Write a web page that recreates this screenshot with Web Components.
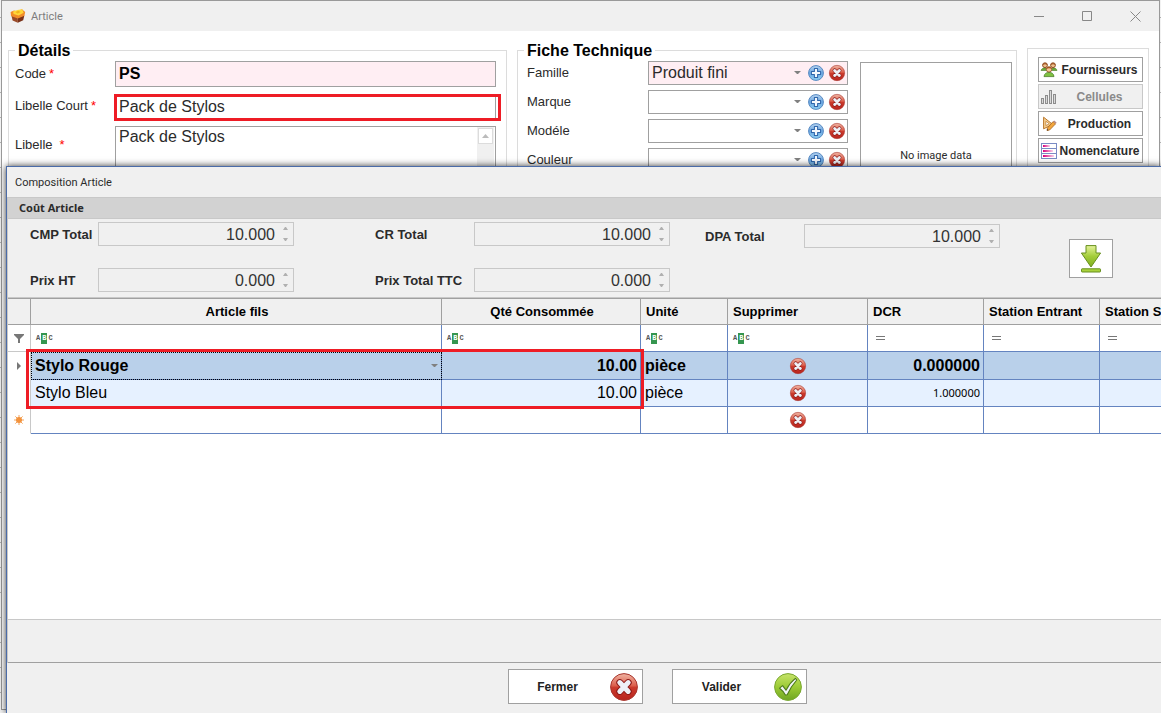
<!DOCTYPE html>
<html lang="fr">
<head>
<meta charset="utf-8">
<title>Article</title>
<style>
  html, body { margin: 0; height: 100%; }
  body {
    overflow: hidden;
    font-family: "Liberation Sans", Arial, sans-serif;
    font-size: 13px;
    color: #2b2b2b;
    --ui: Roboto, Tahoma, sans-serif;
    --ui-wide: "Noto Sans", Tahoma, sans-serif;
    --line: #a0a0a0;
    --soft: #c8c8c8;
    --face: #f0f0f0;
    --mark: #ee1c25;
    --blue: #6484c0;
  }
</style>
</head>
<body>
<app-desktop>
  <app-window caption="Article">
    <group-box caption="Détails">
      <text-field label="Code" value="PS" tone="key"></text-field>
      <text-field label="Libelle Court" value="Pack de Stylos" marked></text-field>
      <memo-field label="Libelle" value="Pack de Stylos"></memo-field>
    </group-box>
    <group-box caption="Fiche Technique">
      <sheet-layout>
        <combo-field label="Famille" value="Produit fini"></combo-field>
        <combo-field label="Marque"></combo-field>
        <combo-field label="Modéle"></combo-field>
        <combo-field label="Couleur"></combo-field>
        <image-box slot="image">No image data</image-box>
      </sheet-layout>
    </group-box>
    <tool-panel>
      <tool-button icon="people">Fournisseurs</tool-button>
      <tool-button icon="bars" disabled>Cellules</tool-button>
      <tool-button icon="draft">Production</tool-button>
      <tool-button icon="list">Nomenclature</tool-button>
    </tool-panel>
  </app-window>
  <composition-dialog slot="dialog" caption="Composition Article">
    <cost-panel slot="cost" caption="Coût Article">
      <number-field slot="a" label="CMP Total" value="10.000" narrow></number-field>
      <number-field slot="a" label="Prix HT" value="0.000" narrow></number-field>
      <number-field slot="b" label="CR Total" value="10.000"></number-field>
      <number-field slot="b" label="Prix Total TTC" value="0.000"></number-field>
      <number-field slot="c" label="DPA Total" value="10.000"></number-field>
    </cost-panel>
    <component-grid></component-grid>
    <dialog-button slot="actions" icon="cross">Fermer</dialog-button>
    <dialog-button slot="actions" icon="check">Valider</dialog-button>
  </composition-dialog>
</app-desktop>

<script>
const ICONS = {
  cross: `<svg viewBox="0 0 28 28"><defs><linearGradient id="g" x1="0" y1="0" x2="0" y2="1"><stop offset="0" stop-color="#f0b5a4"/><stop offset=".45" stop-color="#dc5f4c"/><stop offset=".52" stop-color="#cb3a2c"/><stop offset="1" stop-color="#b8241e"/></linearGradient></defs>
    <circle cx="14" cy="14" r="13.4" fill="url(#g)" stroke="#a8372f" stroke-width="1"/>
    <path d="M9.8 9.6 18.2 18.4M18.2 9.6 9.8 18.4" stroke="#8d1a18" stroke-width="7" stroke-linecap="round"/>
    <path d="M9.8 9.6 18.2 18.4M18.2 9.6 9.8 18.4" stroke="#eef0f6" stroke-width="5" stroke-linecap="round"/></svg>`,
  plus: `<svg viewBox="0 0 28 28"><defs><linearGradient id="g" x1="0" y1="0" x2="0" y2="1"><stop offset="0" stop-color="#b6d3f0"/><stop offset=".5" stop-color="#6ba6e0"/><stop offset="1" stop-color="#8fd0f3"/></linearGradient></defs>
    <circle cx="14" cy="14" r="13" fill="url(#g)" stroke="#4f82bd" stroke-width="1.6"/>
    <path d="M11.2 6h5.6v5.2H22v5.6h-5.2V22h-5.6v-5.2H6v-5.6h5.2z" fill="#f4f8fd" stroke="#2f66ab" stroke-width="1.8" stroke-linejoin="round"/></svg>`,
  check: `<svg viewBox="0 0 28 28"><defs><linearGradient id="g" x1="0" y1="0" x2="0" y2="1"><stop offset="0" stop-color="#c6e36a"/><stop offset=".5" stop-color="#9ccb35"/><stop offset="1" stop-color="#6fa524"/></linearGradient></defs>
    <circle cx="14" cy="14" r="13.4" fill="url(#g)" stroke="#7aa832" stroke-width="1"/>
    <path d="M5.6 15.2 8.6 12.6 12 17.2C14.4 12.4 17.6 8.4 21.4 5.4L22.8 7C18.8 11.4 15.8 16 13.2 21.8L11.4 22C9.8 19.2 7.8 16.8 5.6 15.2z" fill="#f2f5f8" stroke="#4d7a1c" stroke-width="1.1" stroke-linejoin="round"/></svg>`,
  down: `<svg viewBox="0 0 22 28"><defs><linearGradient id="g" x1="0" y1="0" x2="0" y2="1"><stop offset="0" stop-color="#e4f39a"/><stop offset=".5" stop-color="#a3cd3a"/><stop offset="1" stop-color="#7fae20"/></linearGradient></defs>
    <path d="M6 .6h10v7.4h4.6L11 22 1.4 8H6z" fill="url(#g)" stroke="#668f1e" stroke-width="1" stroke-linejoin="round"/>
    <rect x="1.5" y="23.8" width="19" height="3.2" rx=".6" fill="#a9d23c" stroke="#668f1e"/></svg>`,
  people: `<svg viewBox="0 0 16 16"><path d="M0 8.5C.6 6.6 2 6 3.6 6s2.8.6 3.2 2.5zM9.2 8.5C9.8 6.6 11.2 6 12.8 6s2.6.6 3.2 2.5z" fill="#6fa93c" stroke="#4c7f28" stroke-width=".6"/>
    <circle cx="4" cy="3.2" r="2.4" fill="#efc08e" stroke="#8e4f22"/><circle cx="12" cy="3.2" r="2.4" fill="#efc08e" stroke="#8e4f22"/>
    <path d="M1.6 3C1.6.6 6.4.6 6.4 3 5 1.8 3 1.9 1.6 3zM9.6 3c0-2.4 4.8-2.4 4.8 0-1.4-1.2-3.4-1.1-4.8 0z" fill="#9a4b1c"/>
    <path d="M3 14.6C3.4 11.4 5.4 10.4 8 10.4s4.6 1 5 4.2z" fill="#7fc241" stroke="#4c7f28" stroke-width=".8"/>
    <circle cx="8" cy="7.4" r="2.7" fill="#f3c998" stroke="#8e4f22" stroke-width=".8"/><path d="M5.2 7C5.2 4 10.8 4 10.8 7 9.2 5.9 6.8 5.9 5.2 7z" fill="#a7561f"/></svg>`,
  bars: `<svg viewBox="0 0 16 16" style="fill:#d9d9d9" stroke="#8d8d8d"><rect x=".5" y="9.5" width="2" height="5"/><rect x="4.5" y="6.5" width="2" height="8"/><rect x="8.5" y="1.5" width="2" height="13"/><rect x="12.5" y="5.5" width="2" height="9"/></svg>`,
  draft: `<svg viewBox="0 0 16 16"><path d="M2.6 1.2V12.8L11.6 8.4z" fill="#f7cf8f" stroke="#b9772c"/><path d="M4.8 5.2V9.6L8.2 7.8z" fill="#fff" stroke="#b9772c" stroke-width=".7"/>
    <path d="M6 14.6 6.4 12 12 5.6l2.6 2.2-6 6.2z" fill="#f2a63c" stroke="#a7641f" stroke-width=".8"/><path d="m12 5.6 1.2-1 2.4 2-1 1.2z" fill="#b98c86"/><path d="m6 14.6.3-1.6 1.2 1.1z" fill="#333"/></svg>`,
  list: `<svg viewBox="0 0 16 16"><defs><linearGradient id="g"><stop offset="0" stop-color="#d6007c"/><stop offset="1" stop-color="#f8d3ea"/></linearGradient></defs>
    <rect x=".5" y=".5" width="15" height="15" fill="#fff" stroke="#7a8bc4"/><path d="M.5 5.5h15M.5 10.5h15" stroke="#7a8bc4"/>
    <rect x="2" y="2" width="7" height="2" fill="url(#g)"/><rect x="2" y="7" width="10" height="2" fill="url(#g)"/><rect x="2" y="12" width="11" height="2" fill="url(#g)"/></svg>`,
  box: `<svg viewBox="0 0 16 16"><path d="M1.4 7.6 7.8 9.8v5L2.6 12.6z" fill="#9a4a28"/><path d="m7.8 9.8 6.6-2.6-1.2 5-5.4 2.6z" fill="#7a3219"/>
    <path d="M.6 4 4 2.4 7 3.2l5-2L15.2 4l-.8 3.8-6.6 2.6L1 8z" fill="#f28c28"/><path d="M3 3.4 7.4 2l4.8-.8 1.4 3.6-5 2.6-5-1.4z" fill="#ffd83a"/><path d="m5.4 4 3-1.2 2.2 1.2-3 1.6z" fill="#f3b31c"/></svg>`,
  caret: `<svg viewBox="0 0 7 4"><path d="M0 0h7L4 3H3z" fill="#808080"/></svg>`,
  funnel: `<svg viewBox="0 0 10 10"><path d="M0 1h10v1L6 6v4H4V6L0 2z" fill="#777"/></svg>`,
  star: `<svg viewBox="0 0 10 10"><path d="M5 0v10M0 5h10M1.4 1.4l7.2 7.2M8.6 1.4 1.4 8.6" stroke="#f3a45a" stroke-width="1"/><circle cx="5" cy="5" r="3" fill="#f3923c"/></svg>`
};

class Base extends HTMLElement {
  connectedCallback() {
    if (!this.shadowRoot) {
      this.attachShadow({ mode: 'open' }).innerHTML = this.render();
    }
  }
  attr(name) { return this.getAttribute(name) || ''; }
}
const define = (name, render) =>
  customElements.define(name, class extends Base { render() { return render(this); } });

define('ui-icon', el => `<style>
  :host { display: block; width: 16px; height: 16px; flex: none; }
  :host([size="large"]) { width: 28px; height: 28px; }
  :host([size="arrow"]) { width: 22px; height: 28px; }
  :host([size="small"]) { width: 10px; height: 10px; }
  :host([size="caret"]) { width: 7px; height: 4px; }
  svg { display: block; width: 100%; height: 100%; fill: none; overflow: visible; }
</style>${ICONS[el.attr('name')]}`);

define('app-desktop', () => `<style>
  :host { display: block; position: relative; box-sizing: border-box; height: 100vh; overflow: hidden;
    padding: 0 1px 3px 1px;
    background: repeating-linear-gradient(#f2f2f2 0 17px, #b0b0b0 17px 18px, #f2f2f2 18px 25px); }
</style><slot></slot><slot name="dialog"></slot>`);

define('app-window', el => `<style>
  :host { display: flex; flex-direction: column; box-sizing: border-box; height: 100%; overflow: hidden;
    border: 1px solid #999; background: #fff; }
  header { display: flex; align-items: center; flex: none; height: 30px; padding-left: 8px; background: var(--face);
    font: 11px/16px var(--ui); color: #7d7d7d; }
  h1 { margin: 0 auto 0 5px; padding-top: 1px; font: inherit; }
  button { width: 48px; height: 30px; padding: 0; border: 0; background: none; }
  svg { display: block; margin: auto; fill: none; stroke: #888; }
  main { display: grid; grid-template-columns: 499fr 500fr 122px; gap: 10px; flex: 1; padding: 10px 10px 0 6px; }
</style>
<header><ui-icon name="box"></ui-icon><h1>${el.attr('caption')}</h1>
  <button aria-label="Réduire"><svg width="11" height="11"><path d="M0 5.5h10"/></svg></button>
  <button aria-label="Agrandir"><svg width="11" height="11"><path d="M.5.5h9v9h-9z"/></svg></button>
  <button aria-label="Fermer"><svg width="11" height="11"><path d="m.5.5 10 10m0-10-10 10"/></svg></button>
</header>
<main><slot></slot></main>`);

define('group-box', el => `<style>
  :host { display: flex; min-width: 0; }
  fieldset { flex: 1; min-width: 0; margin: 0; padding: 2px 4px 0 6px; border: 1px solid #dcdcdc; }
  legend { margin-left: 0; padding: 1px 3px 0; font-weight: bold; font-size: 16px; line-height: 17px; color: #000; }
  div { display: flex; flex-direction: column; gap: 7px; }
</style><fieldset><legend>${el.attr('caption')}</legend><div><slot></slot></div></fieldset>`);

const fieldRow = `
  :host { display: flex; position: relative; }
  label { width: 100px; flex: none; line-height: 16px; padding-top: 4px; }
  i { color: #f00; font-style: normal; margin-left: 3px; }
  input, textarea { box-sizing: border-box; flex: 1; min-width: 0; margin: 0 6px 0 0; border: 1px solid var(--line); border-radius: 0;
    padding: 0 3px; font: 16px/18px "Liberation Sans", Arial, sans-serif; color: #2b2b2b; background: #fff; outline: 0; }`;

define('text-field', el => `<style>${fieldRow}
  input { height: 26px; }
  :host([tone="key"]) input { background: #ffeef3; font-weight: bold; color: #000; }
  :host([tone="key"]) label { padding-top: 5px; }
  :host([marked]) input { height: 25px; }
  :host([marked]) { height: 25px; }
  .mark { display: none; }
  :host([marked]) .mark { display: block; position: absolute; inset: 0 1px -2px 99px; border: 3px solid var(--mark); }
</style><label for="f">${el.attr('label')}<i>*</i></label><input id="f" value="${el.attr('value')}"><span class="mark"></span>`);

define('memo-field', el => `<style>${fieldRow}
  label { padding-top: 11px; }
  i { margin-left: 7px; }
  textarea { height: 80px; resize: none; overflow: hidden; padding-top: 1px; }
  .bar { position: absolute; right: 8px; top: 1px; width: 17px; height: 78px; background: #f0f0f0; }
  .up { display: grid; place-items: center; box-sizing: border-box; width: 15px; height: 16px; margin: 1px; border: 1px solid #dcdcdc; background: #fff; }
</style><label for="f">${el.attr('label')}<i>*</i></label><textarea id="f">${el.attr('value')}</textarea>
<span class="bar"><span class="up"><svg width="7" height="4"><path d="M0 4h7L3.5 0z" fill="#bbb"/></svg></span></span>`);

define('sheet-layout', () => `<style>
  :host { display: flex; gap: 12px; }
  .fields { display: flex; flex-direction: column; gap: 5px; flex: 1; padding-left: 3px; }
  .image { display: flex; padding-top: 1px; }
</style><div class="fields"><slot></slot></div><div class="image"><slot name="image"></slot></div>`);

define('combo-field', el => `<style>
  :host { display: flex; justify-content: space-between; }
  label { line-height: 16px; padding-top: 4px; }
  .box { display: flex; align-items: center; box-sizing: border-box; width: 200px; height: 24px; padding-right: 2px; border: 1px solid var(--line); }
  .box.full { background: #ffeef3; }
  select { flex: 1; min-width: 0; height: 22px; appearance: none; border: 0; border-radius: 0; background: none; padding: 0 3px; color: #2b2b2b;
    font: 16px/18px "Liberation Sans", Arial, sans-serif; outline: 0; }
  button { border: 0; padding: 0; margin-left: 5px; background: none; }
  ui-icon[size] { margin-right: 2px; }
</style><label for="f">${el.attr('label')}</label>
<div class="box ${el.attr('value') ? 'full' : ''}"><select id="f"><option>${el.attr('value')}</option></select><ui-icon name="caret" size="caret"></ui-icon>
<button aria-label="Ajouter"><ui-icon name="plus"></ui-icon></button><button aria-label="Effacer"><ui-icon name="cross"></ui-icon></button></div>`);

define('image-box', () => `<style>
  :host { display: grid; place-items: center; box-sizing: border-box; width: 152px; height: 188px; border: 1px solid var(--line); font: 11px/14px var(--ui); }
</style><slot></slot>`);

define('tool-panel', () => `<style>
  :host { display: flex; flex-direction: column; gap: 2px; margin-top: 7px; padding: 8px 5px 0 10px; border: 1px solid #dcdcdc; }
</style><slot></slot>`);

define('tool-button', el => `<style>
  :host { display: block; }
  button { display: flex; align-items: center; width: 100%; height: 25px; padding: 0 2px; border: 1px solid var(--line); border-radius: 0; background: #fff;
    font: bold 12px/16px "Liberation Sans", Arial, sans-serif; color: #2b2b2b; }
  button:disabled { background: var(--face); border-color: var(--soft); color: #8a8a8a; }
  span { flex: 1; padding-left: 2px; text-align: center; white-space: nowrap; }
</style><button ${el.hasAttribute('disabled') ? 'disabled' : ''}><ui-icon name="${el.attr('icon')}"></ui-icon><span><slot></slot></span></button>`);

define('composition-dialog', el => `<style>
  :host { position: absolute; inset: 166px 0 0 6px; display: flex; flex-direction: column; border: solid #4a6ba8; border-width: 1px 0 0 1px;
    background: var(--face); box-shadow: 0 0 7px rgba(0, 0, 0, .8); }
  h2 { flex: none; margin: 0; padding: 8px 8px 6px; font: 11px/16px var(--ui); }
  .body { display: flex; flex-direction: column; flex: 1; min-height: 0; border-left: 1px solid var(--soft); background: #fff; }
  .summary { flex: none; height: 42px; border-top: 1px solid var(--soft); border-bottom: 1px solid var(--line); background: var(--face); }
  .grid { flex: 1; min-height: 0; }
  footer { display: flex; justify-content: center; gap: 29px; flex: none; padding: 6px 0 9px 147px; }
</style><h2>${el.attr('caption')}</h2>
<div class="body"><slot name="cost"></slot><div class="grid"><slot></slot></div><div class="summary"></div></div>
<footer><slot name="actions"></slot></footer>`);

define('cost-panel', el => `<style>
  :host { display: block; background: var(--face); border-bottom: 1px solid var(--soft); }
  h3 { margin: 0; padding: 3px 11px; background: #d2d2d2; border: solid var(--soft); border-width: 1px 0; font: bold 11px/14px var(--ui-wide); }
  .row { display: flex; padding: 3px 0 5px 22px; }
  .col { display: flex; flex-direction: column; gap: 22px; }
  .b { margin-left: 81px; }
  .c { margin: 2px 0 0 35px; }
  button { display: grid; place-items: center; width: 44px; height: 39px; margin: 17px 0 0 69px; padding: 0; border: 1px solid var(--line); background: #fff; }
</style><h3>${el.attr('caption')}</h3>
<div class="row"><div class="col"><slot name="a"></slot></div><div class="col b"><slot name="b"></slot></div><div class="col c"><slot name="c"></slot></div>
<button aria-label="Importer"><ui-icon name="down" size="arrow"></ui-icon></button></div>`);

define('number-field', el => `<style>
  :host { display: flex; align-items: center; }
  label { width: 99px; padding-top: 2px; font-weight: bold; line-height: 16px; white-space: nowrap; }
  :host([narrow]) label { width: 68px; }
  .box { display: flex; align-items: center; box-sizing: border-box; width: 196px; height: 24px; padding-right: 4px; border: 1px solid var(--soft); }
  input { box-sizing: border-box; flex: 1; min-width: 0; height: 22px; border: 0; padding: 2px 7px 0 0; background: none; text-align: right; color: #333; outline: 0;
    font: 16px/18px "Liberation Sans", Arial, sans-serif; }
</style><label for="f">${el.attr('label')}</label><div class="box"><input id="f" inputmode="decimal" readonly value="${el.attr('value')}">
<svg width="7" height="14"><path d="M1 3h5L4 0H3zM1 11h5l-2 3H3z" fill="#b0b0b0"/></svg></div>`);

define('match-mark', () => `<style>
  :host { display: flex; align-items: center; height: 11px; font: bold 7px/9px "Liberation Mono", monospace; color: #555; }
  b { padding: 1px; margin: 0 1px; background: #35964f; color: #fff; }
</style><span>A</span><b>B</b><span>C</span>`);

define('component-grid', () => {
  const cross = '<button aria-label="Supprimer"><ui-icon name="cross"></ui-icon></button>';
  return `<style>
  :host { display: block; position: relative; height: 100%; }
  .clip { overflow: hidden; height: 100%; }
  table { table-layout: fixed; width: 1208px; border-collapse: separate; border-spacing: 0; color: #000; }
  th, td { box-sizing: border-box; height: 27px; padding: 0 3px 0 4px; border: solid var(--blue); border-width: 0 1px 1px 0; text-align: left; white-space: nowrap; overflow: hidden; }
  th { background: var(--face); border-color: var(--line); font-size: 13px; padding-left: 5px; }
  thead tr:first-child th { border-top: 1px solid var(--line); }
  .c { text-align: center; }
  .filter td { padding-left: 5px; }
  .filter td:first-child { border-bottom-color: var(--soft); }
  td:first-child { border-right-color: var(--soft); border-bottom-color: transparent; padding: 0 6px; }
  tbody td { font-size: 16px; line-height: 18px; }
  .n { text-align: right; }
  .current td { height: 28px; font-weight: bold; }
  .current td:not(:first-child) { background: #b9d0ea; }
  .alt td:not(:first-child) { background: #e6f1ff; }
  tbody td.small { font: 11px/14px var(--ui-wide); text-align: right; }
  .focus { outline: 1px dotted #000; outline-offset: -1px; }
  .edit { display: flex; align-items: center; justify-content: space-between; }
  button { display: block; margin: auto; padding: 0; border: 0; background: none; }
  .eq { width: 9px; height: 2px; margin-left: 3px; border: solid #777; border-width: 1px 0; }
  .mark { position: absolute; left: 18px; top: 51px; width: 612px; height: 54px; border: 3px solid var(--mark); }
</style>
<div class="clip"><table>
  <colgroup><col style="width:23px"><col style="width:411px"><col style="width:199px"><col style="width:87px"><col style="width:140px"><col style="width:116px"><col style="width:116px"><col style="width:116px"></colgroup>
  <thead><tr><th></th><th class="c">Article fils</th><th class="c">Qté Consommée</th><th>Unité</th><th>Supprimer</th><th>DCR</th><th>Station Entrant</th><th>Station S</th></tr></thead>
  <tbody>
  <tr class="filter"><td><ui-icon name="funnel" size="small"></ui-icon></td><td><match-mark></match-mark></td><td><match-mark></match-mark></td><td><match-mark></match-mark></td><td><match-mark></match-mark></td><td><div class="eq"></div></td><td><div class="eq"></div></td><td><div class="eq"></div></td></tr>
  <tr class="current"><td><svg width="10" height="8" style="display:block"><path d="M3 0v8l4-4z" fill="#777"/></svg></td><td class="focus"><div class="edit">Stylo Rouge<ui-icon name="caret" size="caret"></ui-icon></div></td><td class="n">10.00</td><td>pièce</td><td>${cross}</td><td class="n">0.000000</td><td></td><td></td></tr>
  <tr class="alt"><td></td><td>Stylo Bleu</td><td class="n">10.00</td><td>pièce</td><td>${cross}</td><td class="small">1.000000</td><td></td><td></td></tr>
  <tr><td><ui-icon name="star" size="small"></ui-icon></td><td></td><td></td><td></td><td>${cross}</td><td></td><td></td><td></td></tr>
  </tbody>
</table></div><div class="mark"></div>`;
});

define('dialog-button', el => `<style>
  :host { display: block; }
  button { display: flex; align-items: center; width: 135px; height: 35px; padding: 0 4px 0 0; border: 1px solid var(--line); border-radius: 0; background: #fff;
    font: bold 12px/16px "Liberation Sans", Arial, sans-serif; color: #222; }
  span { flex: 1; padding-right: 4px; text-align: center; }
</style><button><span><slot></slot></span><ui-icon name="${el.attr('icon')}" size="large"></ui-icon></button>`);
</script>
</body>
</html>
